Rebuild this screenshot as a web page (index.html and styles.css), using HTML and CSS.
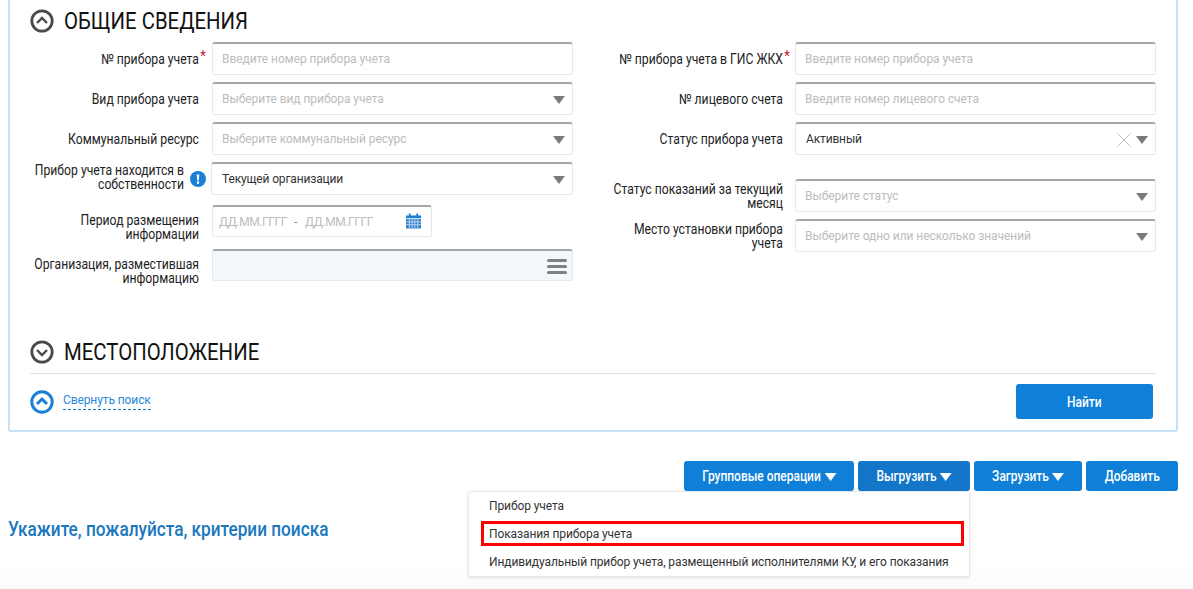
FILE: index.html
```html
<!DOCTYPE html>
<html lang="ru">
<head>
<meta charset="utf-8">
<title>Приборы учета</title>
<link rel="stylesheet" href="styles.css">
</head>
<body>
<section class="panel">
  <h2 class="heading">
    <svg class="circle" viewBox="0 0 24 24"><circle cx="12" cy="12" r="10.2" fill="none" stroke="#4a4a4a" stroke-width="2.8"/><path d="M7 14l5-5 5 5" fill="none" stroke="#4a4a4a" stroke-width="2.4"/></svg>
    <span class="heading-text">ОБЩИЕ СВЕДЕНИЯ</span>
  </h2>
  <div class="form">
    <div class="col col-left">
      <div class="row"><div class="label">№ прибора учета<i class="req">*</i></div><div class="field"><span class="ph">Введите номер прибора учета</span></div></div>
      <div class="row"><div class="label">Вид прибора учета</div><div class="field"><span class="ph">Выберите вид прибора учета</span><b class="tri"></b></div></div>
      <div class="row"><div class="label">Коммунальный ресурс</div><div class="field"><span class="ph">Выберите коммунальный ресурс</span><b class="tri"></b></div></div>
      <div class="row row-own"><div class="label label-info">Прибор учета находится в<br>собственности</div>
        <svg class="info" viewBox="0 0 16 16"><circle cx="8" cy="8" r="8" fill="#1a7fd6"/><path d="M6.7 3.5h2.6L8.8 9.5H7.2zM6.9 10.5h2.2v2.2H6.9z" fill="#fff"/></svg>
        <div class="field field-own"><span class="val">Текущей организации</span><b class="tri"></b></div></div>
      <div class="row row-date"><div class="label label-low">Период размещения<br>информации</div><div class="field field-date"><span class="ph date">ДД.ММ.ГГГГ</span><span class="dash">-</span><span class="ph date">ДД.ММ.ГГГГ</span>
        <svg class="cal" viewBox="0 0 16 16"><path d="M0 2h3V0h2v2h6V0h2v2h3v3H0z" fill="#1a7fd6"/><path d="M0 6h16v10H0z" fill="#2f7fd0"/><path d="M3.5 6v10M6.5 6v10M9.5 6v10M12.5 6v10M0 9h16M0 12h16" stroke="#cfe3f7" stroke-width=".9"/></svg></div></div>
      <div class="row row-org"><div class="label label-low">Организация, разместившая<br>информацию</div><div class="field field-off"><b class="menu"></b></div></div>
    </div>
    <div class="col col-right">
      <div class="row"><div class="label">№ прибора учета в ГИС ЖКХ<i class="req">*</i></div><div class="field"><span class="ph">Введите номер прибора учета</span></div></div>
      <div class="row"><div class="label">№ лицевого счета</div><div class="field"><span class="ph">Введите номер лицевого счета</span></div></div>
      <div class="row"><div class="label">Статус прибора учета</div><div class="field"><span class="val">Активный</span>
        <svg class="clear" viewBox="0 0 14 14"><path d="M.5.5l13 13M13.5.5l-13 13" stroke="#b4bcc4" stroke-width="1" fill="none"/></svg><b class="tri tri-near"></b></div></div>
      <div class="row row-status"><div class="label">Статус показаний за текущий<br>месяц</div><div class="field"><span class="ph">Выберите статус</span><b class="tri"></b></div></div>
      <div class="row"><div class="label">Место установки прибора<br>учета</div><div class="field"><span class="ph">Выберите одно или несколько значений</span><b class="tri"></b></div></div>
    </div>
  </div>
  <h2 class="heading heading-rule">
    <svg class="circle" viewBox="0 0 24 24"><circle cx="12" cy="12" r="10.2" fill="none" stroke="#4a4a4a" stroke-width="2.8"/><path d="M7 10l5 5 5-5" fill="none" stroke="#4a4a4a" stroke-width="2.4"/></svg>
    <span class="heading-text">МЕСТОПОЛОЖЕНИЕ</span>
  </h2>
  <div class="actions">
    <svg class="circle" viewBox="0 0 24 24"><circle cx="12" cy="12" r="10.2" fill="none" stroke="#1a7fd6" stroke-width="3"/><path d="M7 14l5-5 5 5" fill="none" stroke="#1a7fd6" stroke-width="3"/></svg>
    <a class="collapse">Свернуть поиск</a>
    <button class="btn btn-find"><span class="btn-in">Найти</span></button>
  </div>
</section>
<div class="toolbar">
  <button class="btn btn-group"><span class="btn-in">Групповые операции<b class="tri-w"></b></span></button>
  <button class="btn btn-export"><span class="btn-in">Выгрузить<b class="tri-w"></b></span></button>
  <button class="btn btn-import"><span class="btn-in">Загрузить<b class="tri-w"></b></span></button>
  <button class="btn btn-add"><span class="btn-in">Добавить</span></button>
  <ul class="dropdown">
    <li>Прибор учета</li>
    <li class="marked">Показания прибора учета</li>
    <li>Индивидуальный прибор учета, размещенный исполнителями КУ, и его показания</li>
  </ul>
</div>
<p class="hint">Укажите, пожалуйста, критерии поиска</p>
</body>
</html>
```
FILE: styles.css
```css
html, body { margin: 0; padding: 0; }
body {
  height: 589px;
  overflow: hidden;
  background: linear-gradient(#fff 570px, #fafafa 589px);
  font-family: Roboto, "Liberation Sans", sans-serif;
  color: #222;
}
.panel {
  box-sizing: border-box;
  width: 1170px;
  height: 432px;
  margin-left: 8px;
  padding: 0 20px;
  border: 2px solid #c6e0f6;
  border-top: 0;
  border-radius: 0 0 3px 3px;
}
.heading {
  display: flex;
  align-items: center;
  gap: 10px;
  margin: 0;
  height: 42px;
  font-size: 24px;
  font-weight: 400;
  color: #111;
}
.heading-text {
  display: inline-block;
  transform: scaleX(.848);
  transform-origin: left center;
}
.circle { width: 24px; height: 24px; flex: none; }
.form { display: flex; height: 290px; }
.col { width: 565px; flex: none; }
.col-right { margin-left: 18px; }
.row { display: flex; align-items: center; height: 33px; margin-bottom: 7px; }
.label {
  box-sizing: border-box;
  width: 200px;
  margin-left: -31px;
  margin-right: 13px;
  flex: none;
  text-align: right;
  font-size: 14px;
  line-height: 14px;
  white-space: nowrap;
  color: #222;
  position: relative;
  transform: scaleX(.87);
  transform-origin: right center;
}
.col-right .label { margin-left: -30px; margin-right: 12px; }
.req { position: absolute; right: -8px; top: -3px; color: #c8102e; font-style: normal; font-size: 15px; }
.label-info { margin-left: -46px; margin-right: 0; padding-bottom: 3px; }
.label-low { padding-top: 12px; }
.info { width: 16px; height: 16px; margin: 0 5px 0 6px; flex: none; }
.field {
  box-sizing: border-box;
  position: relative;
  display: flex;
  align-items: center;
  width: 361px;
  height: 33px;
  padding-left: 9px;
  background: #fff;
  border: 1px solid #e6e9ec;
  border-top: 2px solid #a3a7ab;
  border-radius: 3px;
  font-size: 12px;
}
.field-own { width: 362px; }
.ph { color: #bcbcbc; letter-spacing: -.05px; }
.val { color: #333; margin-left: 1px; letter-spacing: -.15px; }
.tri {
  position: absolute;
  right: 7px;
  top: 12px;
  border-style: solid;
  border-width: 8px 6px 0;
  border-color: #7b7b7b transparent transparent;
}
.clear { position: absolute; right: 24px; top: 9px; width: 14px; height: 14px; }
.row-own { margin-bottom: 10px; }
.row-date { height: 32px; margin-bottom: 11px; }
.field-date { width: 220px; height: 32px; padding-left: 6px; }
.date { flex: none; width: 75px; letter-spacing: -.4px; }
.dash { flex: none; color: #888; width: 11px; }
.cal { position: absolute; right: 10px; top: 6px; width: 15px; height: 16px; }
.field-off { height: 32px; background: #f3f6fb; }
.menu {
  position: absolute;
  right: 5px;
  top: 8px;
  width: 20px;
  height: 3px;
  background: #808080;
  box-shadow: 0 6px 0 #808080, 0 12px 0 #808080;
  border-radius: 2px;
}
.row-status { margin-top: 24px; }
.heading-rule {
  height: 39px;
  padding-bottom: 2px;
  border-bottom: 1px solid #e2e2e2;
  width: 1126px;
}
.actions { display: flex; align-items: center; height: 37px; margin-top: 9px; }
.collapse {
  margin-left: 9px;
  padding-bottom: 2px;
  border-bottom: 1px dashed #1a6fb8;
  color: #2a86d8;
  font-size: 12px;
  line-height: 14px;
  letter-spacing: -.1px;
}
.btn {
  height: 30px;
  padding: 0;
  border: 0;
  border-radius: 3px;
  background: #0f7fd8;
  color: #fff;
  font-family: inherit;
  font-size: 14px;
  font-weight: 500;
}
.btn-in {
  display: inline-block;
  white-space: nowrap;
  transform: scaleX(.855);
}
.btn-find { width: 137px; height: 35px; margin-left: auto; margin-right: 3px; }
.toolbar {
  position: relative;
  display: flex;
  justify-content: flex-end;
  gap: 4px;
  width: 1178px;
  margin-top: 29px;
}
.btn-group { width: 170px; }
.btn-export { width: 112px; background: #1476c8; }
.btn-import { width: 108px; }
.btn-add { width: 92px; }
.tri-w {
  display: inline-block;
  margin-left: 4px;
  border-style: solid;
  border-width: 8px 7px 0;
  border-color: #fff transparent transparent;
}
.dropdown {
  position: absolute;
  left: 468px;
  top: 30px;
  box-sizing: border-box;
  width: 502px;
  height: 86px;
  margin: 0;
  padding: 1px 0 0;
  list-style: none;
  background: #fff;
  border: 1px solid #e6e8ee;
  border-radius: 3px;
  box-shadow: 0 1px 3px rgba(0,0,0,.12);
  font-size: 12px;
  letter-spacing: -.1px;
  color: #333;
}
.dropdown li { height: 28px; line-height: 27px; padding-left: 20px; }
.marked { position: relative; }
.marked::after {
  content: "";
  position: absolute;
  left: 12px;
  top: 0;
  width: 483px;
  height: 25px;
  box-sizing: border-box;
  border: 3px solid #f00;
}
.hint {
  margin: 26px 0 0 8px;
  font-size: 20px;
  line-height: 24px;
  font-weight: 500;
  color: #1a78be;
  white-space: nowrap;
  transform: scaleX(.86);
  transform-origin: left center;
}
```
